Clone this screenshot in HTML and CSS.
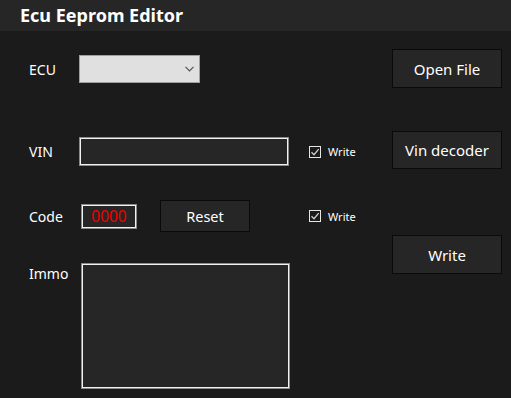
FILE: index.html
```html
<!DOCTYPE html>
<html>
<head>
<meta charset="utf-8">
<link rel="stylesheet" href="styles.css">
</head>
<body>
<div class="app">
  <header class="titlebar"><h1 class="title">Ecu Eeprom Editor</h1></header>
  <main class="content">
    <section class="form">
      <div class="row row-ecu">
        <span class="label">ECU</span>
        <div class="select">
          <svg class="chev" width="9" height="6" viewBox="0 0 9 6"><path d="M0.5 0.8 L4.5 4.8 L8.5 0.8" fill="none" stroke="#555" stroke-width="1.2"/></svg>
        </div>
      </div>
      <div class="row row-vin">
        <span class="label">VIN</span>
        <div class="field vin"></div>
        <label class="check">
          <span class="box"><svg width="10" height="10" viewBox="0 0 10 10"><path d="M1.5 5.2 L4 7.7 L8.7 2.2" fill="none" stroke="#cfcfcf" stroke-width="1.3"/></svg></span>
          <span class="ctext">Write</span>
        </label>
      </div>
      <div class="row row-code">
        <span class="label">Code</span>
        <div class="field code">0000</div>
        <button class="btn reset">Reset</button>
        <label class="check check-code">
          <span class="box"><svg width="10" height="10" viewBox="0 0 10 10"><path d="M1.5 5.2 L4 7.7 L8.7 2.2" fill="none" stroke="#cfcfcf" stroke-width="1.3"/></svg></span>
          <span class="ctext">Write</span>
        </label>
      </div>
      <div class="row row-immo">
        <span class="label">Immo</span>
        <div class="field immo"></div>
      </div>
    </section>
    <aside class="actions">
      <button class="btn big open">Open File</button>
      <button class="btn big vindec">Vin decoder</button>
      <button class="btn big write">Write</button>
    </aside>
  </main>
</div>
</body>
</html>
```

FILE: styles.css
```css
html, body {
  margin: 0;
  padding: 0;
  background: #1b1b1b;
}
body {
  width: 511px;
  height: 398px;
  overflow: hidden;
  font-family: "Noto Sans", "Open Sans", sans-serif;
  color: #ffffff;
}
.app {
  display: flex;
  flex-direction: column;
  height: 398px;
}
.titlebar {
  height: 31px;
  background: #262626;
  display: flex;
  align-items: center;
  padding-left: 20px;
}
.title {
  margin: 0;
  font-size: 18px;
  font-weight: 700;
  line-height: 20px;
  color: #ffffff;
  padding-bottom: 1px;
}
.content {
  display: flex;
}
.form {
  width: 392px;
  padding-left: 29px;
  box-sizing: border-box;
  display: flex;
  flex-direction: column;
}
.row {
  display: flex;
  align-items: center;
}
.label {
  width: 50px;
  font-size: 14px;
  color: #ffffff;
  flex: none;
}
.row-ecu { margin-top: 24px; height: 28px; }
.select {
  width: 121px;
  height: 28px;
  box-sizing: border-box;
  background: #e0e0e0;
  border: 1px solid #a0a0a0;
  display: flex;
  align-items: center;
  justify-content: flex-end;
  padding-right: 5px;
}
.row-vin { margin-top: 54px; height: 29px; }
.field {
  box-sizing: border-box;
  background: #262626;
  border: 1px solid #8a8a8a;
  box-shadow: inset 0 0 0 1px #f2f2f2;
}
.vin { width: 210px; height: 29px; }
.check {
  display: flex;
  align-items: center;
  margin-left: 20px;
}
.box {
  width: 12px;
  height: 12px;
  box-sizing: border-box;
  border: 1px solid #e6e6e6;
  background: #1b1b1b;
  display: flex;
  align-items: center;
  justify-content: center;
}
.ctext {
  margin-left: 7px;
  font-size: 11px;
  color: #ffffff;
}
.row-code { margin-top: 34px; height: 32px; }
.row-code .label { width: 52px; }
.code {
  width: 56px;
  height: 25px;
  color: #f00000;
  font-size: 15.5px;
  display: flex;
  align-items: center;
  justify-content: center;
}
.btn {
  font-family: "Noto Sans", "Open Sans", sans-serif;
  background: #262626;
  border: 1px solid #0a0a0a;
  color: #ffffff;
  font-size: 14.5px;
  padding: 0;
  box-sizing: border-box;
}
.reset {
  margin-left: 23px;
  width: 90px;
  height: 32px;
}
.check-code { margin-left: 59px; }
.row-immo {
  margin-top: 31px;
  align-items: flex-start;
}
.row-immo .label { width: 52px; margin-top: 1px; }
.immo { width: 209px; height: 126px; }
.actions {
  display: flex;
  flex-direction: column;
}
.big {
  width: 110px;
  height: 39px;
  font-size: 15px;
}
.open { margin-top: 18px; }
.vindec { margin-top: 43px; height: 38px; }
.write { margin-top: 66px; }
```
